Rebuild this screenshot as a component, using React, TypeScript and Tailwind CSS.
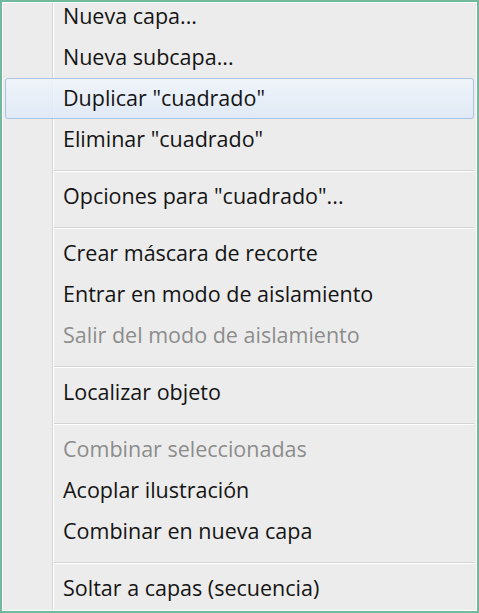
type MenuEntry =
  | { kind: "item"; label: string; disabled?: boolean; active?: boolean }
  | { kind: "separator" };

const entries: MenuEntry[] = [
  { kind: "item", label: "Nueva capa..." },
  { kind: "item", label: "Nueva subcapa..." },
  { kind: "item", label: 'Duplicar "cuadrado"', active: true },
  { kind: "item", label: 'Eliminar "cuadrado"' },
  { kind: "separator" },
  { kind: "item", label: 'Opciones para "cuadrado"...' },
  { kind: "separator" },
  { kind: "item", label: "Crear máscara de recorte" },
  { kind: "item", label: "Entrar en modo de aislamiento" },
  { kind: "item", label: "Salir del modo de aislamiento", disabled: true },
  { kind: "separator" },
  { kind: "item", label: "Localizar objeto" },
  { kind: "separator" },
  { kind: "item", label: "Combinar seleccionadas", disabled: true },
  { kind: "item", label: "Acoplar ilustración" },
  { kind: "item", label: "Combinar en nueva capa" },
  { kind: "separator" },
  { kind: "item", label: "Soltar a capas (secuencia)" },
];

export default function App() {
  return (
    <div className="h-[613px] w-[479px] overflow-hidden border-2 border-[#72b89c] bg-[#ececec] font-['Open_Sans',sans-serif]">
      <div className="h-full overflow-hidden border border-white bg-[linear-gradient(to_right,transparent_49px,#d6d6d6_49px,#d6d6d6_50px,#ffffff_50px,#ffffff_51px,transparent_51px)] px-[2px]">
        <ul className="-mt-[7px] flex flex-col">
          {entries.map((entry, i) =>
            entry.kind === "separator" ? (
              <li key={i} className="h-[16px] pt-[10px] pl-[49px]">
                <div className="h-px bg-[#d4d4d4]" />
                <div className="h-px bg-white" />
              </li>
            ) : (
              <li
                key={i}
                className={`flex h-[41px] items-center whitespace-nowrap rounded-[3px] border pl-[57px] text-[21.5px] ${
                  entry.active
                    ? "border-[#a9c4e6] bg-[linear-gradient(to_bottom,rgba(240,245,252,0.85),rgba(222,233,247,0.85))]"
                    : "border-transparent"
                } ${entry.disabled ? "text-[#8c8c8c]" : "text-[#141414]"}`}
              >
                {entry.label}
              </li>
            )
          )}
        </ul>
      </div>
    </div>
  );
}
